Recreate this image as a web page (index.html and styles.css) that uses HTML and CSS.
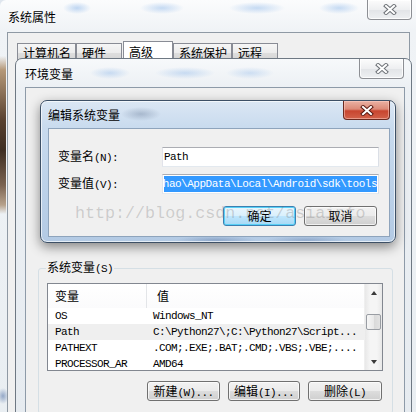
FILE: index.html
```html
<!DOCTYPE html>
<html lang="zh-CN">
<head>
<meta charset="utf-8">
<title>系统属性</title>
<link rel="stylesheet" href="styles.css">
</head>
<body>
<div class="win sys">
  <div class="sys-title">系统属性</div>
  <div class="close gray sys-close"><svg width="14" height="11" viewBox="0 0 14 11"><path d="M3 2 L11 9 M11 2 L3 9" class="xo"/><path d="M3 2 L11 9 M11 2 L3 9" class="xi"/></svg></div>
  <div class="sys-client">
    <div class="tabs">
      <div class="tab">计算机名</div>
      <div class="tab">硬件</div>
      <div class="tab active">高级</div>
      <div class="tab">系统保护</div>
      <div class="tab">远程</div>
    </div>
  </div>
</div>

<div class="win env">
  <div class="env-title">环境变量</div>
  <div class="close gray env-close"><svg width="14" height="11" viewBox="0 0 14 11"><path d="M3 2 L11 9 M11 2 L3 9" class="xo"/><path d="M3 2 L11 9 M11 2 L3 9" class="xi"/></svg></div>
  <div class="env-client">
    <fieldset class="group">
      <legend>系统变量<span class="k">(S)</span></legend>
      <div class="list">
        <div class="list-body">
          <div class="lhead">
            <div class="hc1">变量</div>
            <div class="hc2">值</div>
          </div>
          <div class="row"><div class="c1 mono">OS</div><div class="c2 mono">Windows_NT</div></div>
          <div class="row alt"><div class="c1 mono">Path</div><div class="c2 mono">C:\Python27\;C:\Python27\Script...</div></div>
          <div class="row"><div class="c1 mono">PATHEXT</div><div class="c2 mono">.COM;.EXE;.BAT;.CMD;.VBS;.VBE;....</div></div>
          <div class="row"><div class="c1 mono">PROCESSOR_AR</div><div class="c2 mono">AMD64</div></div>
        </div>
        <div class="vscroll">
          <div class="arrow"><span class="tri up"></span></div>
          <div class="thumb"></div>
          <div class="track"></div>
          <div class="arrow"><span class="tri down"></span></div>
        </div>
      </div>
      <div class="btn-row">
        <div class="btn w73">新建<span class="k">(W)...</span></div>
        <div class="btn w72">编辑<span class="k">(I)...</span></div>
        <div class="btn w74">删除<span class="k">(L)</span></div>
      </div>
    </fieldset>
  </div>
</div>

<div class="win edit">
  <div class="edit-title">编辑系统变量</div>
  <div class="close red edit-close"><svg width="14" height="11" viewBox="0 0 14 11"><path d="M3 2 L11 9 M11 2 L3 9" class="xo r"/><path d="M3 2 L11 9 M11 2 L3 9" class="xi"/></svg></div>
  <div class="edit-client">
    <div class="field">
      <div class="lbl">变量名<span class="k">(N):</span></div>
      <div class="input mono"><span class="val">Path</span></div>
    </div>
    <div class="field">
      <div class="lbl">变量值<span class="k">(V):</span></div>
      <div class="input mono"><span class="sel">C:\Users\jiazhao\AppData\Local\Android\sdk\tools</span></div>
    </div>
    <div class="edit-btns">
      <div class="btn w73 default">确定</div>
      <div class="btn w73">取消</div>
    </div>
  </div>
</div>

<div class="watermark">http://blog.csdn.net/asiainfo</div>
</body>
</html>
```

FILE: styles.css
```css
* { box-sizing: border-box; }
html, body { margin: 0; padding: 0; }
body {
  width: 416px;
  height: 412px;
  overflow: hidden;
  position: relative;
  background: #dfe6ee;
  font-family: "Noto Sans CJK SC", "Liberation Sans", sans-serif;
  font-size: 12px;
  color: #000;
}
.mono, .k {
  font-family: "Liberation Mono", "DejaVu Sans Mono", monospace;
  font-size: 11px;
  letter-spacing: -0.6px;
}

.win { position: absolute; }

/* ---------- 系统属性 ---------- */
.sys {
  left: 0; top: 0;
  width: 416px; height: 420px;
  display: flex; flex-direction: column;
  padding: 0 6px 0 7px;
  border-radius: 6px 0 0 0;
  background:
    linear-gradient(to bottom, transparent 56px, #b59878 70px, #5a4230 120px, #3f2e22 150px, #7a6250 185px, #b7a28c 205px, transparent 214px) left top / 6px 100% no-repeat,
    radial-gradient(ellipse 6px 8px at 3px 396px, rgba(90,120,170,.6), transparent) left top / 8px 100% no-repeat,
    linear-gradient(to bottom, #fbfcfd, #f0f3f6 30px, #e9eef2);
}
.sys-title {
  height: 32px;
  display: flex; align-items: center;
  padding-left: 1px;
  background:
    radial-gradient(ellipse 14px 6px at 70px 8px, rgba(120,170,230,.45), transparent),
    radial-gradient(ellipse 22px 6px at 155px 8px, rgba(120,170,230,.4), transparent),
    radial-gradient(ellipse 28px 6px at 250px 8px, rgba(120,170,230,.4), transparent),
    radial-gradient(ellipse 20px 6px at 332px 8px, rgba(120,170,230,.4), transparent);
}
.sys-client {
  flex: 1;
  border: 1px solid #8f99a4;
  background: #f0f0f0;
  padding: 4px 0 0 9px;
}
.tabs { display: flex; align-items: flex-end; height: 25px; }
.tab {
  height: 19px;
  line-height: 18px;
  min-width: 46px;
  padding: 0 4px 0 5px;
  border: 1px solid #898c95;
  border-bottom: none;
  background: linear-gradient(#f6f6f6, #ececec 50%, #dedede 50%, #d2d2d2);
}
.tab.active {
  height: 21px;
  line-height: 20px;
  width: 50px;
  margin-left: 1px;
  background: #fff;
}

/* ---------- close buttons ---------- */
.close {
  position: absolute;
  height: 20px; width: 45px;
  display: flex; align-items: center; justify-content: center;
  border-radius: 0 0 4px 4px;
}
.close.gray {
  border: 1px solid #8d8f94;
  border-top: none;
  background: linear-gradient(#fcfcfc, #eeeff1 50%, #e2e4e7 51%, #eef0f2);
  box-shadow: inset 0 0 0 1px rgba(255,255,255,.8);
}
.close.red {
  border: 1px solid #6b2a20;
  border-top: none;
  background: linear-gradient(#eab1a3, #dc8a78 45%, #c8452f 55%, #d2614a);
  box-shadow: inset 0 0 0 1px rgba(255,210,200,.5);
}
.xo { stroke: #6f7378; stroke-width: 4; fill: none; stroke-linecap: square; }
.xo.r { stroke: #5a1a12; }
.xi { stroke: #fff; stroke-width: 2; fill: none; stroke-linecap: square; }
.sys-close { right: 4px; top: 0; }
.env-close { right: 7px; top: 0; }
.edit-close { right: 5px; top: 0; width: 47px; height: 19px; }

/* ---------- 环境变量 ---------- */
.env {
  left: 15px; top: 58px;
  width: 397px; height: 360px;
  border: 1px solid #6e7883;
  border-radius: 7px 7px 0 0;
  display: flex; flex-direction: column;
  padding: 0 6px 0 9px;
  background: linear-gradient(#f7f9fb, #ecf0f4 28px, #e6ebf0);
}
.env-title {
  height: 28px;
  display: flex; align-items: center;
  background:
    radial-gradient(ellipse 20px 6px at 85px 14px, rgba(120,170,230,.35), transparent),
    radial-gradient(ellipse 30px 6px at 160px 14px, rgba(120,170,230,.35), transparent),
    radial-gradient(ellipse 24px 6px at 225px 14px, rgba(120,170,230,.3), transparent);
}
.env-client {
  flex: 1;
  border: 1px solid #8d9aa8;
  background: #f0f0f0;
  padding: 171px 11px 0 12px;
}
.group {
  margin: 0;
  min-width: 0;
  border: 1px solid #d5dfe5;
  border-radius: 3px;
  padding: 0 9px 12px 8px;
}
.group legend {
  padding: 0 1px;
  margin-left: -1px;
  line-height: 16px;
}
.list {
  margin-top: 6px;
  height: 88px;
  border: 1px solid #828790;
  background: #fff;
  display: flex;
  overflow: hidden;
}
.list-body { flex: 1; overflow: hidden; }
.lhead {
  height: 24px;
  display: flex;
  line-height: 24px;
  background: linear-gradient(#ffffff, #fbfbfc);
}
.hc1 { width: 99px; padding-left: 7px; border-right: 1px solid #e3e5e8; }
.hc2 { padding-left: 10px; }
.row { height: 16px; line-height: 16px; display: flex; white-space: nowrap; }
.row.alt { background: #efefef; }
.c1 { width: 99px; padding-left: 7px; }
.c2 { padding-left: 6px; }
.vscroll {
  width: 18px;
  display: flex; flex-direction: column;
  background: linear-gradient(to right, #e8e8e8, #f5f5f5 30%, #f5f5f5 70%, #e8e8e8);
  border-left: 1px solid #efefef;
}
.arrow { height: 17px; display: flex; align-items: center; justify-content: center; }
.tri { width: 0; height: 0; border-left: 3.5px solid transparent; border-right: 3.5px solid transparent; }
.tri.up { border-bottom: 4px solid #3a3a3a; }
.tri.down { border-top: 4px solid #3a3a3a; }
.thumb {
  height: 16px;
  margin: 13px 1px 0 1px;
  border: 1px solid #999da3;
  border-radius: 2px;
  background: linear-gradient(to right, #f6f6f6, #e9e9e9 50%, #d9d9d9 51%, #e2e2e2);
}
.track { flex: 1; }
.btn-row {
  margin-top: 10px;
  display: flex;
  justify-content: flex-end;
  gap: 8px;
  padding-right: 1px;
}

/* ---------- buttons ---------- */
.btn {
  height: 20px;
  line-height: 18px;
  text-align: center;
  white-space: nowrap;
  border: 1px solid #707070;
  border-radius: 3px;
  background: linear-gradient(#f2f2f2, #ebebeb 50%, #dddddd 51%, #cfcfcf);
  box-shadow: inset 0 0 0 1px rgba(255,255,255,.7);
}
.btn.default {
  border-color: #3c7fb1;
  background: linear-gradient(#eaf6fd, #d9f0fc 50%, #bee6fd 51%, #a7d9f5);
  box-shadow: inset 0 0 0 1px #58d0f6;
}
.w72 { width: 72px; }
.w73 { width: 73px; }
.w74 { width: 74px; }

/* ---------- 编辑系统变量 ---------- */
.edit {
  left: 40px; top: 100px;
  width: 356px; height: 143px;
  border: 1px solid #3d5066;
  border-radius: 7px;
  padding: 0 5px 5px 7px;
  display: flex; flex-direction: column;
  background:
    radial-gradient(ellipse 20px 7px at 100px 13px, rgba(90,110,140,.35), transparent),
    radial-gradient(ellipse 40px 4px at 175px 139px, rgba(70,100,150,.35), transparent),
    radial-gradient(ellipse 40px 4px at 265px 139px, rgba(70,100,150,.3), transparent),
    linear-gradient(#dbe7f4, #c9dbee 26px, #bdd2e9 60%, #b3cae4);
  box-shadow: 0 4px 12px rgba(0,0,0,.45), inset 0 0 0 1px rgba(255,255,255,.65);
}
.edit-title {
  height: 27px;
  display: flex; align-items: center;
}
.edit-client {
  flex: 1;
  border: 1px solid #8ea4bc;
  background: #f0f0f0;
  padding: 18px 10px 0 9px;
  display: flex; flex-direction: column;
}
.field {
  display: flex;
  align-items: center;
  height: 20px;
  margin-bottom: 7px;
}
.lbl { width: 104px; line-height: 20px; }
.input {
  flex: 1;
  height: 20px;
  border: 1px solid;
  border-color: #abadb3 #dbdfe6 #e3e9ef #e2e3ea;
  background: #fff;
  display: flex;
  align-items: center;
  overflow: hidden;
}
.val { padding-left: 1px; line-height: 16px; }
.sel {
  flex: 1;
  height: 16px;
  margin: 0 1px;
  line-height: 16px;
  letter-spacing: -0.48px;
  display: flex;
  justify-content: flex-end;
  overflow: hidden;
  white-space: nowrap;
  background: #3399ff;
  color: #fff;
}
.edit-btns {
  margin-top: 5px;
  display: flex;
  justify-content: flex-end;
  gap: 8px;
  padding-right: 2px;
}

/* ---------- watermark ---------- */
.watermark {
  position: absolute;
  left: 75px; top: 203px;
  font-family: "Liberation Mono", monospace;
  font-size: 16.7px;
  line-height: 22px;
  color: rgba(110,110,110,.28);
  white-space: nowrap;
  pointer-events: none;
}
```
